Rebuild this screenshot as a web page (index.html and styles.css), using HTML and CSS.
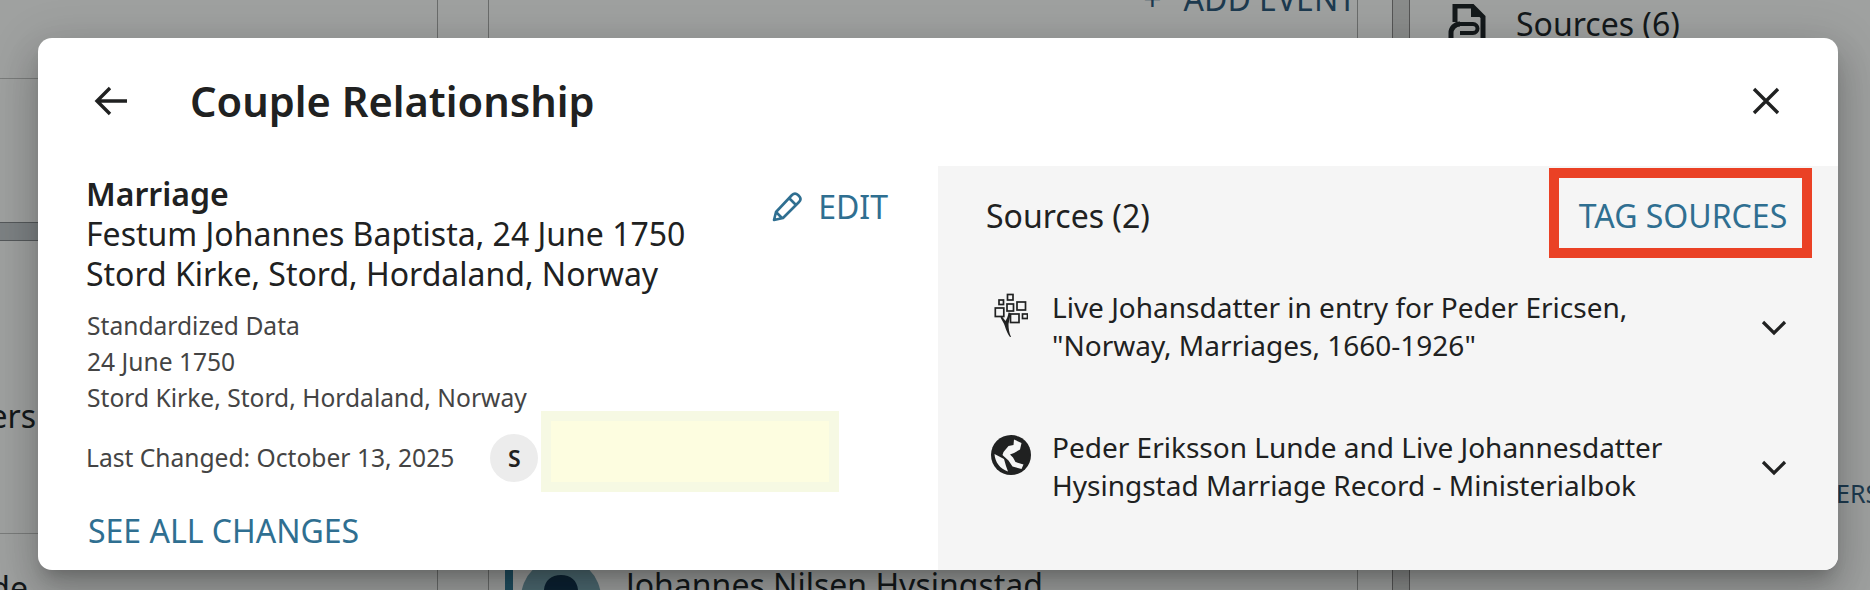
FILE: index.html
```html
<!DOCTYPE html>
<html lang="en">
<head>
    <meta charset="UTF-8">
    <title>Couple Relationship</title>
    <link rel="stylesheet" href="styles.css">
</head>
<body>
<div class="page">
    <div class="leftCol">
        <div class="leftRule"></div>
        <div class="strip"></div>
        <div class="leftText">Others</div>
        <div class="leftRule lower"></div>
        <div class="leftTail">Side</div>
    </div>
    <div class="mainCol">
        <div class="addEvent"><span class="plus">+</span>ADD EVENT</div>
        <div class="personRow">
            <div class="personBar"></div>
            <svg class="avatar" viewBox="0 0 80 80">
                <circle cx="40" cy="40" r="40" fill="#4d6a72"/>
                <path d="M23 36c-1-12 6-19 17-19s18 7 17 19v26H23z" fill="#0c2233"/>
            </svg>
            <div class="personName">Johannes Nilsen Hysingstad</div>
        </div>
    </div>
    <div class="rail"></div>
    <div class="sideCol">
        <div class="sideSources">
            <svg class="sideIcon" viewBox="0 0 38 46">
                <path d="M7 18V2h17l11 11v33M7 46v-4" fill="none" stroke="#14191b" stroke-width="5"/>
                <path d="M23 0l13 13H23z" fill="#14191b"/>
                <path d="M12 20c-5 0-9 4-9 9v17" fill="none" stroke="#14191b" stroke-width="5"/>
                <path d="M10 20h15a4.500 4.500 0 0 1 0 9H12" fill="none" stroke="#14191b" stroke-width="4"/>
            </svg>
            <span>Sources (6)</span>
        </div>
        <div class="sideParen">(12)</div>
        <div class="sideLink">ERS</div>
    </div>
</div>

<div class="modal">
    <div class="modalHeader">
        <svg class="backIcon" viewBox="0 0 34 30">
            <path d="M33 15H3M16 2L3 15l13 13" fill="none" stroke="#202121" stroke-width="3.4"/>
        </svg>
        <h1>Couple Relationship</h1>
        <svg class="closeIcon" viewBox="0 0 28 28">
            <path d="M2 2l24 24M26 2L2 26" fill="none" stroke="#202121" stroke-width="3.4"/>
        </svg>
    </div>
    <div class="modalBody">
        <div class="eventPane">
            <div class="eventTop">
                <div class="eventText">
                    <div class="eventType">Marriage</div>
                    <div>Festum Johannes Baptista, 24 June 1750</div>
                    <div>Stord Kirke, Stord, Hordaland, Norway</div>
                </div>
                <a class="editLink">
                    <svg class="editIcon" viewBox="0 0 30 30">
                        <path d="M2 28l2-8L20 3c2-2 4-2 6 0l1 1c2 2 2 4 0 6L11 26zM17 6l7 7M4 20l6 6" fill="none" stroke="#2f6f91" stroke-width="2.6" stroke-linejoin="round"/>
                    </svg>
                    EDIT
                </a>
            </div>
            <div class="standardized">
                <div>Standardized Data</div>
                <div>24 June 1750</div>
                <div>Stord Kirke, Stord, Hordaland, Norway</div>
            </div>
            <div class="changedRow">
                <span>Last Changed: October 13, 2025</span>
                <span class="userBadge">S</span>
                <span class="redacted"></span>
            </div>
            <a class="seeAll">SEE ALL CHANGES</a>
        </div>
        <div class="sourcePane">
            <div class="sourceHead">
                <span class="sourceTitle">Sources (2)</span>
                <a class="tagLink">TAG SOURCES</a>
            </div>
            <div class="sourceRow">
                <div class="iconBox">
                    <svg class="treeIcon" viewBox="14 14 34 44">
                        <g fill="none" stroke="#202121" stroke-width="1.7">
                            <rect x="27.500" y="15.500" width="5.500" height="5.500"/>
                            <rect x="19" y="21" width="4.500" height="4.500"/>
                            <rect x="27" y="25" width="6.500" height="7"/>
                            <rect x="37" y="23" width="8.500" height="8"/>
                            <rect x="15.300" y="29" width="8.500" height="8.500"/>
                            <rect x="30.500" y="35" width="8.500" height="8.500"/>
                            <rect x="42.500" y="35" width="5" height="4.500"/>
                        </g>
                        <path d="M30 58C26 53 25.500 47 23 43l-2.500-4.500 1.500-1 3.500 4.500c1.500-2.500 2.500-5 3-8.500l2 .5c-.5 5-1.500 8-2 11 0 4 .5 9 2.500 13z" fill="#202121"/>
                    </svg>
                </div>
                <div class="sourceText">Live Johansdatter in entry for Peder Ericsen,<br>"Norway, Marriages, 1660-1926"</div>
                <svg class="chevron" viewBox="0 0 26 16">
                    <path d="M2 2l11 11L24 2" fill="none" stroke="#202121" stroke-width="3.2"/>
                </svg>
            </div>
            <div class="sourceRow">
                <div class="iconBox">
                    <svg class="globeIcon" viewBox="0 0 40 40">
                        <circle cx="20" cy="20" r="20" fill="#202121"/>
                        <path d="M23 4.500l7.500 3.500-1.500 6.500-6 3.500-4 1.500 3 3 2.500 4.500 8 2.500-2 4.500-9-2.500-4-6-5-4.500-1-1 1-3 5-6 5-1z" fill="#f5f5f5"/>
                        <path d="M3.500 19l9.500 5 2 7 2 5.500C9 34 4 27 3.500 19z" fill="#f5f5f5"/>
                    </svg>
                </div>
                <div class="sourceText">Peder Eriksson Lunde and Live Johannesdatter<br>Hysingstad Marriage Record - Ministerialbok</div>
                <svg class="chevron" viewBox="0 0 26 16">
                    <path d="M2 2l11 11L24 2" fill="none" stroke="#202121" stroke-width="3.2"/>
                </svg>
            </div>
        </div>
    </div>
</div>
</body>
</html>
```

FILE: styles.css
```css
* { box-sizing: border-box; }

html, body {
    margin: 0;
    padding: 0;
    height: 590px;
    overflow: hidden;
}

body {
    font-family: 'Noto Sans', sans-serif;
    background: #9fa1a0;
    color: #202121;
    position: relative;
}

/* page behind the dialog */
.page {
    display: flex;
    height: 590px;
    overflow: hidden;
    color: #14191b;
    font-size: 32px;
    line-height: 40px;
}

.leftCol {
    width: 438px;
    flex-shrink: 0;
    border-right: 1px solid #6a6c6b;
    margin-right: 50px;
}

.leftRule {
    height: 1px;
    background: #7a7c7b;
    margin-top: 78px;
}

.leftRule.lower { margin-top: 97px; }

.strip {
    height: 19px;
    margin-top: 143px;
    background: #7d8284;
    border-top: 1px solid #55595b;
    border-bottom: 1px solid #55595b;
}

.leftText {
    width: 36px;
    display: flex;
    justify-content: flex-end;
    margin-top: 155px;
}

.leftTail {
    width: 28px;
    display: flex;
    justify-content: flex-end;
    margin-top: 34px;
}

.mainCol {
    width: 870px;
    flex-shrink: 0;
    border-left: 1px solid #6a6c6b;
    border-right: 1px solid #6a6c6b;
    display: flex;
    flex-direction: column;
    justify-content: space-between;
}

.addEvent {
    text-align: right;
    margin-top: -21px;
    padding-right: 1px;
    color: #1d3a4f;
}

.plus { margin-right: 22px; }

.personRow {
    display: flex;
    margin-left: 16px;
    margin-bottom: -50px;
    height: 100px;
}

.personBar {
    width: 8px;
    background: #1f4e60;
}

.avatar {
    width: 80px;
    height: 80px;
    margin-left: 8px;
    margin-top: 18px;
}

.personName {
    line-height: 48px;
    margin-left: 25px;
    margin-top: 21px;
    white-space: nowrap;
}

.rail {
    width: 18px;
    margin-left: 34px;
    flex-shrink: 0;
    background: #8a8c8b;
    border-left: 1px solid #555;
    border-right: 1px solid #555;
}

.sideCol {
    flex: 1;
    min-width: 0;
}

.sideSources {
    display: flex;
    align-items: flex-start;
    gap: 30px;
    margin-left: 38px;
    margin-top: 4px;
}

.sideIcon {
    width: 38px;
    height: 46px;
}

.sideParen {
    margin-top: 105px;
    margin-left: 364px;
    white-space: nowrap;
}

.sideLink {
    color: #1d3a4f;
    font-size: 25px;
    margin-top: 278px;
    margin-left: 426px;
    white-space: nowrap;
}

/* dialog */
.modal {
    position: absolute;
    left: 38px;
    top: 38px;
    width: 1800px;
    height: 532px;
    background: #fff;
    border-radius: 14px;
    overflow: hidden;
    display: flex;
    flex-direction: column;
    box-shadow: 0 11px 15px -7px rgba(0,0,0,.2), 0 24px 38px 3px rgba(0,0,0,.14), 0 9px 46px 8px rgba(0,0,0,.12);
}

.modalHeader {
    display: flex;
    align-items: center;
    flex-shrink: 0;
    height: 128px;
    padding: 0 58px 2px 56px;
}

.modalHeader h1 {
    font-size: 41.6px;
    font-weight: 600;
    margin: 0 0 0 62px;
    flex: 1;
    color: #202121;
}

.backIcon {
    width: 34px;
    height: 30px;
}

.closeIcon {
    width: 28px;
    height: 28px;
}

.modalBody {
    display: flex;
    flex: 1;
    min-height: 0;
}

.eventPane {
    width: 900px;
    padding: 8px 50px 0 48px;
    font-size: 32px;
    line-height: 40px;
}

.eventTop {
    display: flex;
    justify-content: space-between;
}

.eventType { font-weight: 600; }

a { color: #2f6f91; }

.editLink {
    display: flex;
    align-items: center;
    gap: 16px;
    height: 40px;
    margin-top: 13px;
}

.editIcon {
    width: 30px;
    height: 30px;
}

.standardized {
    font-size: 24.600px;
    line-height: 36px;
    color: #444;
    margin-top: 14px;
    margin-left: 1px;
}

.changedRow {
    display: flex;
    align-items: flex-start;
    font-size: 24.600px;
    line-height: 48px;
    color: #444;
    height: 48px;
    margin-top: 18px;
}

.userBadge {
    width: 48px;
    height: 48px;
    border-radius: 50%;
    background: #ececec;
    color: #202121;
    font-size: 23px;
    font-weight: 600;
    text-align: center;
    margin-left: 36px;
}

.redacted {
    width: 298px;
    height: 81px;
    margin-left: 3px;
    margin-top: -23px;
    background: #fdfde0;
    border: 10px solid #f6f9e3;
}

.seeAll {
    display: block;
    margin-top: 29px;
    margin-left: 2px;
}

.sourcePane {
    width: 900px;
    background: #f5f5f5;
    font-size: 28px;
    line-height: 38px;
    padding: 2px 26px 0 48px;
}

.sourceHead {
    display: flex;
    justify-content: space-between;
    height: 90px;
    font-size: 32px;
    margin-bottom: 30px;
}

.sourceTitle { line-height: 96px; }

.tagLink {
    border: 10px solid #ea4125;
    height: 90px;
    width: 263px;
    padding-left: 5px;
    line-height: 76px;
    text-align: center;
}

.sourceRow {
    display: flex;
    align-items: flex-start;
    height: 140px;
    padding-right: 25px;
}

.iconBox {
    width: 49px;
    margin-right: 17px;
    display: flex;
    justify-content: center;
    flex-shrink: 0;
}

.treeIcon {
    width: 34px;
    height: 44px;
    margin-top: 5px;
}

.globeIcon {
    width: 40px;
    height: 40px;
    margin-top: 7px;
}

.sourceText { flex: 1; }

.chevron {
    width: 26px;
    height: 16px;
    margin-top: 32px;
}
```
